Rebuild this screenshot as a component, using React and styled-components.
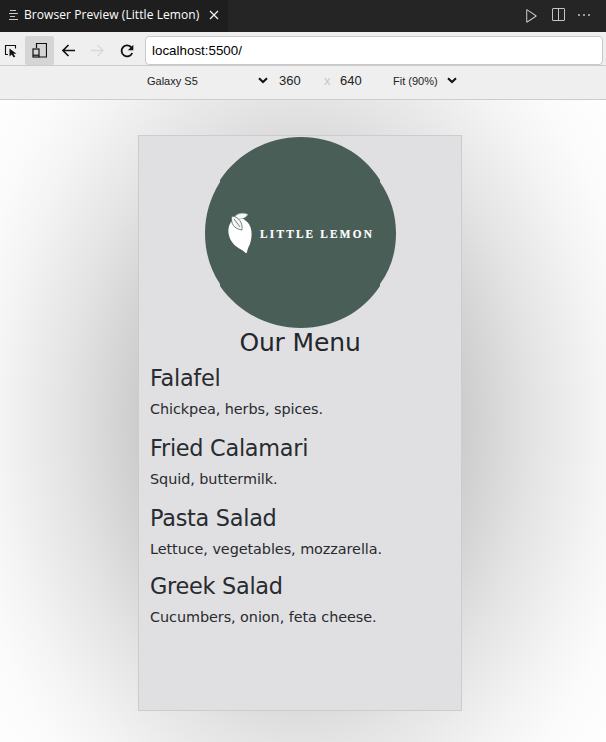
import React from "react";
import styled, { createGlobalStyle } from "styled-components";
import { VscPlay, VscSplitHorizontal, VscEllipsis } from "react-icons/vsc";

const Global = createGlobalStyle`
  * { box-sizing: border-box; }
  body { margin: 0; overflow: hidden; }
`;
const Page = styled.div`
  width: 606px; height: 742px; display: flex; flex-direction: column; overflow: hidden;
  background: #fff; font-family: "Liberation Sans", Arial, sans-serif; color: #222;
`;
const TabBar = styled.header`
  height: 32px; background: #252526; display: flex; justify-content: space-between; flex: none;
`;
const Tab = styled.div`
  width: 228px; height: 32px; background: #1e1e1e; color: #fff; display: flex; align-items: center;
  padding: 0 0 2px 9px; font: 12px/30px "Open Sans", sans-serif;
  svg { flex: none; }
`;
const TabTitle = styled.span`
  width: 176px; margin: 0 9px 0 5px; white-space: nowrap; letter-spacing: 0.07px;
`;
const TabActions = styled.div`
  display: flex; align-items: center; gap: 10px; padding: 0 14px 2px 0; color: #c5c5c5;
`;
const Toolbar = styled.nav`
  height: 34px; flex: none; background: #efefef; display: flex; align-items: flex-start; padding-top: 4px;
  border-bottom: 1px solid #ccc;
`;
const ToolButton = styled.button`
  width: ${(p) => p.$width || 29}px; height: 29px; padding: 0; border: 0; border-radius: 2px;
  background: ${(p) => (p.$active ? "#d5d5d5" : "transparent")};
  color: ${(p) => (p.$disabled ? "#d8d8d8" : "#111")};
  display: flex; align-items: center; justify-content: center;
`;
const InspectButton = styled(ToolButton)`
  justify-content: flex-start; padding: 1px 0 0 4px;
`;
const Address = styled.div`
  width: 458px; height: 29px; margin-left: 4px; border: 1px solid #c8c8c8; border-radius: 4px;
  background: #fff; padding-left: 6px; font-size: 13.33px; line-height: 27px; color: #000; letter-spacing: 0.02px;
`;
const DeviceBar = styled.div`
  height: 34px; flex: none; background: #efefef; border-bottom: 1px solid #ccc;
  display: flex; align-items: center; padding: 0 0 4px 147px;
`;
const Select = styled.div`
  width: ${(p) => p.$width}px; margin-left: ${(p) => p.$gap || 0}px;
  display: flex; justify-content: space-between; align-items: center;
  font-size: 11px; line-height: 16px; color: #222;
`;
const Dimension = styled.span`
  font-size: 13px; line-height: 16px; width: 22px; margin-left: ${(p) => p.$gap}px;
`;
const Times = styled.span`
  font-size: 13px; line-height: 16px; color: #c8c8c8; width: 7px; margin-left: 23px;
`;
const Stage = styled.main`
  flex: 1; display: flex; align-items: flex-start; padding: 35px 0 0 138px; overflow: hidden;
  background: radial-gradient(ellipse 400px 548px at 300px 323px,
    #c4c4c4 32%, #cdcdcd 40.5%, #d9d9d9 50%, #e4e4e4 58.75%, #eaeaea 65%, #f4f4f4 75%, #fbfbfb 85%, #fff 100%);
`;
const Device = styled.section`
  width: 324px; height: 576px; border: 1px solid #ccc; background: #e0e0e2; color: #282b2f;
  font-family: "DejaVu Sans", sans-serif; display: flex; flex-direction: column;
`;
const Logo = styled.svg`
  display: block; width: 192px; height: 192px; margin: 1px 0 0 66px; flex: none;
`;
const MenuTitle = styled.h1`
  margin: -1px 0 0; height: 29px; font-size: 25px; line-height: 29px; font-weight: 400;
  text-align: center; letter-spacing: -0.15px; color: #24272b;
`;
const MenuList = styled.div`
  padding: 8px 0 0 11px;
`;
const Item = styled.article`
  height: ${(p) => p.$height}px;
`;
const Dish = styled.h2`
  margin: 0; font-size: 22.4px; line-height: 26px; font-weight: 400; letter-spacing: -0.28px;
`;
const Ingredients = styled.p`
  margin: 7px 0 0; font-size: 14.4px; line-height: 22px; white-space: nowrap; letter-spacing: -0.06px;
`;

const menu = [
  { name: "Falafel", text: "Chickpea, herbs, spices.", height: 70 },
  { name: "Fried Calamari", text: "Squid, buttermilk.", height: 70 },
  { name: "Pasta Salad", text: "Lettuce, vegetables, mozzarella.", height: 68 },
  { name: "Greek Salad", text: "Cucumbers, onion, feta cheese.", height: 69 },
];

const Chevron = () => (
  <svg width="10" height="7" viewBox="0 0 10 7" fill="none" stroke="#111" strokeWidth="2"><path d="M1 1.2 5 5 9 1.2" /></svg>
);
const DocIcon = () => (
  <svg width="10" height="11" viewBox="0 0 10 11" stroke="#c8c8c8" strokeWidth="1.2"><path d="M1 .5h6M0 3.5h9M1 6.5h5M0 9.5h9" /></svg>
);
const CloseIcon = () => (
  <svg width="10" height="10" viewBox="0 0 10 10" stroke="#eee" strokeWidth="1.3"><path d="m1 1 8 8M9 1 1 9" /></svg>
);
const InspectIcon = () => (
  <svg width="14" height="14" viewBox="0 0 14 14" fill="none" stroke="#111" strokeWidth="1.1">
    <path d="M4 10.5H1.5V1.5h10v3" />
    <path d="M5.5 4.5v8l2.1-1.9 2.2 3 1.5-1-2-2.8h3.2Z" fill="#111" stroke="none" />
  </svg>
);
const DevicesIcon = () => (
  <svg width="15" height="15" viewBox="0 0 15 15" fill="none" stroke="#111" strokeWidth="1.2">
    <path d="M4.5 5V.5h10v13.5H7" /><rect x="1" y="6" width="6" height="8" /><path d="M1 12.2h6" />
  </svg>
);
const Arrow = ({ forward }) => (
  <svg width="13" height="13" viewBox="0 0 13 13" fill="none" stroke="currentColor" strokeWidth={forward ? 1.3 : 1.6}>
    <path d={forward ? "M0 6.5h12M6.5 1 12 6.5 6.5 12" : "M13 6.5H1M6.5 1 1 6.5 6.5 12"} />
  </svg>
);
const ReloadIcon = () => (
  <svg width="14" height="14" viewBox="0 0 14 14" fill="none" stroke="#111" strokeWidth="1.8">
    <path d="M11.5 3.6A5.5 5.5 0 1 0 12.2 9" /><path d="M13.3.8v5.5H7.8Z" fill="#111" stroke="none" />
  </svg>
);
const LittleLemonLogo = () => (
  <Logo viewBox="0 0 192 192">
    <path d="M96 0C129 0 158 16 175 43L175 45C186 61 191 78 191 96C191 115 186 132 175 147L175 149C158 175 129 191 96 191C63 191 33 175 15 149L15 147C5 132 0 115 0 96C0 78 5 61 15 45L15 43C33 16 63 0 96 0Z" fill="#495e57" />
    <path d="M28 83C22 88 22 98 27 105C31 111 37 112 40 115.5Q41.5 117 42 115C42.5 112 43.5 110 45 107C48 98 47 88 41 84C37 80 31 80 28 83Z" fill="#fff" />
    <path d="M29 81C31 76 38 75 43 77.5C40 82 34 83 29 81Z" fill="#f5f7f6" stroke="#8f9c97" strokeWidth=".5" />
    <path d="M27 79C25 86 29 92 37 93C38 86 34 80 27 79ZM29 82L35 90" fill="#f5f7f6" stroke="#53675f" strokeWidth=".8" />
    <text x="55" y="101.5" fill="#fff" fontFamily="Liberation Serif, serif" fontWeight="700" fontSize="11.5" stroke="#fff" strokeWidth=".2" textLength="114" lengthAdjust="spacing" transform="translate(1.2 0) scale(.98 1)">LITTLE LEMON</text>
  </Logo>
);

export default function App() {
  return (
    <Page>
      <Global />
      <TabBar>
        <Tab><DocIcon /><TabTitle>Browser Preview (Little Lemon)</TabTitle><CloseIcon /></Tab>
        <TabActions><VscPlay size={17} /><VscSplitHorizontal size={16} /><VscEllipsis size={16} /></TabActions>
      </TabBar>
      <Toolbar>
        <InspectButton $width={25}><InspectIcon /></InspectButton>
        <ToolButton $active><DevicesIcon /></ToolButton>
        <ToolButton><Arrow /></ToolButton>
        <ToolButton $disabled><Arrow forward /></ToolButton>
        <ToolButton><ReloadIcon /></ToolButton>
        <Address>localhost:5500/</Address>
      </Toolbar>
      <DeviceBar>
        <Select $width={121}>Galaxy S5<Chevron /></Select>
        <Dimension $gap={11}>360</Dimension><Times>x</Times><Dimension $gap={9}>640</Dimension>
        <Select $width={64} $gap={31}>Fit (90%)<Chevron /></Select>
      </DeviceBar>
      <Stage>
        <Device>
          <LittleLemonLogo />
          <MenuTitle>Our Menu</MenuTitle>
          <MenuList>
            {menu.map((m) => (
              <Item key={m.name} $height={m.height}><Dish>{m.name}</Dish><Ingredients>{m.text}</Ingredients></Item>
            ))}
          </MenuList>
        </Device>
      </Stage>
    </Page>
  );
}
